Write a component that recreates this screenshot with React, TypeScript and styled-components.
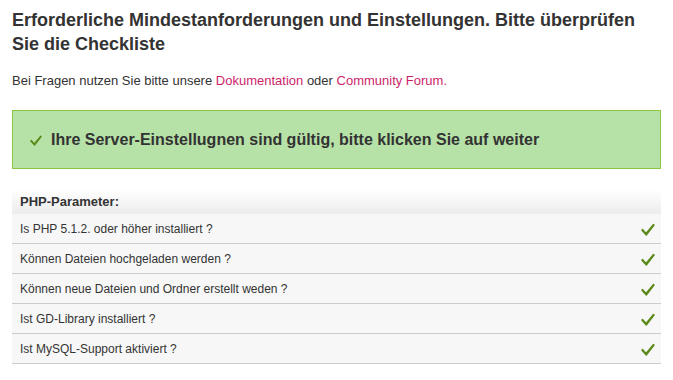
import styled, { createGlobalStyle } from "styled-components";

const GlobalStyle = createGlobalStyle`
  body {
    margin: 0;
    background: #ffffff;
    font-family: "Liberation Sans", Arial, sans-serif;
    color: #333333;
  }
`;

const Page = styled.div`
  padding: 8px 12px 0 12px;
  width: 649px;
`;

const Title = styled.h2`
  margin: 0;
  max-width: 632px;
  font-size: 18px;
  font-weight: bold;
  line-height: 24px;
  color: #333333;
`;

const Intro = styled.p`
  margin: 17px 0 0 0;
  font-size: 13px;
  line-height: 16px;
  color: #333333;
`;

const Link = styled.a`
  color: #cc1f6a;
  text-decoration: none;
`;

const SuccessBox = styled.div`
  margin-top: 21px;
  height: 57px;
  display: flex;
  align-items: center;
  gap: 9px;
  padding: 0 17px;
  background: #b7e2a7;
  border: 1px solid #8dc640;
  font-size: 16px;
  font-weight: bold;
  color: #333333;
`;

const Table = styled.div`
  margin-top: 20px;
  display: flex;
  flex-direction: column;
`;

const Header = styled.div`
  height: 25px;
  display: flex;
  align-items: center;
  padding: 0 8px;
  background: linear-gradient(#ffffff, #ececec);
  font-size: 13px;
  font-weight: bold;
  color: #333333;
`;

const Row = styled.div`
  height: 29px;
  display: flex;
  align-items: center;
  justify-content: space-between;
  padding: 0 6px 0 8px;
  background: #f7f7f7;
  border-bottom: 1px solid #cccccc;
  font-size: 12px;
  color: #333333;
`;

const Check = ({ size = 14 }: { size?: number }) => (
  <svg width={size} height={size} viewBox="0 0 14 14">
    <path
      d="M1.5 7.5 L5 11.5 L12.5 2.5 L13 3 L5.3 13 L1 8.2 Z"
      fill="#5b8a1a"
      stroke="#5b8a1a"
      strokeWidth="1.4"
      strokeLinejoin="round"
    />
  </svg>
);

const checks = [
  "Is PHP 5.1.2. oder höher installiert ?",
  "Können Dateien hochgeladen werden ?",
  "Können neue Dateien und Ordner erstellt weden ?",
  "Ist GD-Library installiert ?",
  "Ist MySQL-Support aktiviert ?",
];

export default function App() {
  return (
    <>
      <GlobalStyle />
      <Page>
        <Title>
          Erforderliche Mindestanforderungen und Einstellungen. Bitte überprüfen
          Sie die Checkliste
        </Title>
        <Intro>
          Bei Fragen nutzen Sie bitte unsere <Link href="#">Dokumentation</Link>{" "}
          oder <Link href="#">Community Forum.</Link>
        </Intro>
        <SuccessBox>
          <Check size={12} />
          Ihre Server-Einstellugnen sind gültig, bitte klicken Sie auf weiter
        </SuccessBox>
        <Table>
          <Header>PHP-Parameter:</Header>
          {checks.map((c) => (
            <Row key={c}>
              {c}
              <Check />
            </Row>
          ))}
        </Table>
      </Page>
    </>
  );
}
